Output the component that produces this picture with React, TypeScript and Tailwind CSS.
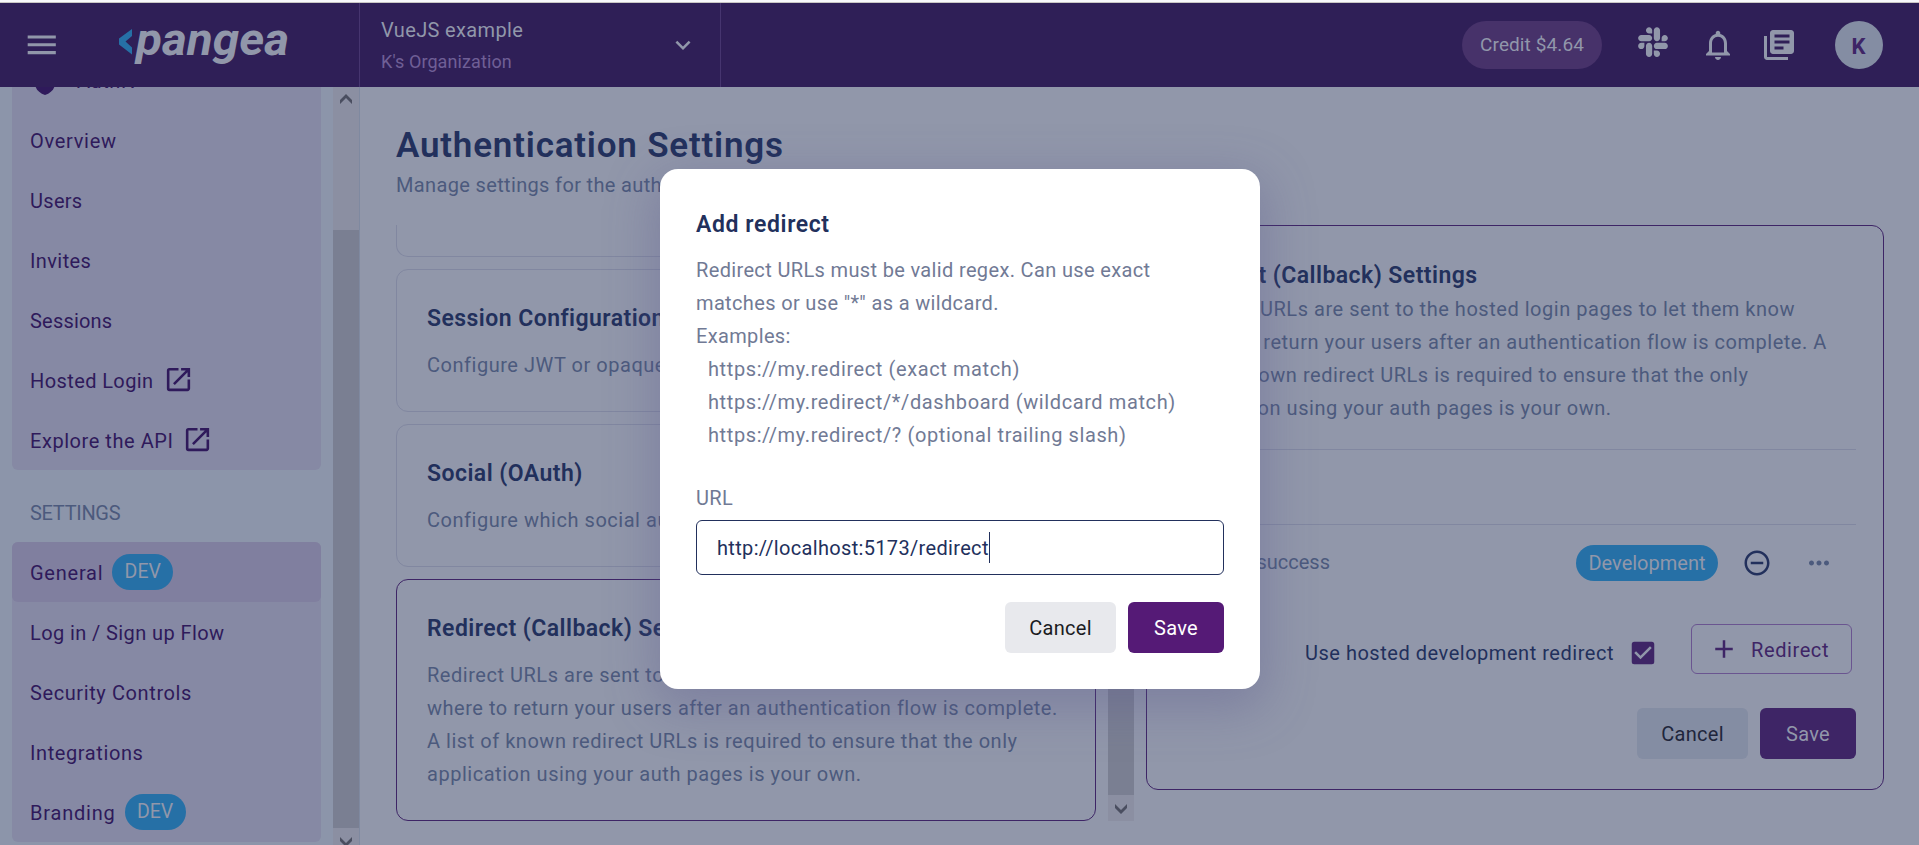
import React from "react";
import {
  MdAdd,
  MdCheckBox,
  MdExpandMore,
  MdLibraryBooks,
  MdMenu,
  MdMoreHoriz,
  MdNotificationsNone,
  MdOpenInNew,
  MdRemoveCircleOutline,
} from "react-icons/md";
import { FaSlack } from "react-icons/fa";

function Logo() {
  return (
    <svg
      width="180"
      height="56"
      viewBox="0 -8 180 56"
      className="block overflow-visible"
      aria-label="pangea"
    >
      <path d="M14 3v7L7.500 15.500l6.500 6v7L1 18.500v-6z" fill="#2670a6" />
      <text
        x="18"
        y="29"
        textLength="153"
        lengthAdjust="spacingAndGlyphs"
        fill="#9197aa"
        fontFamily="Roboto, sans-serif"
        fontWeight="700"
        fontStyle="italic"
        fontSize="47"
      >
        pangea
      </text>
    </svg>
  );
}

function Arrow({ up }: { up?: boolean }) {
  return (
    <svg width="12" height="10" viewBox="0 0 12 10" className="block">
      {up ? (
        <path d="M6 0l6 6v4L6 4 0 10V6z" fill="#4a4e60" />
      ) : (
        <path d="M6 10l6-6V0L6 6 0 0v4z" fill="#4a4e60" />
      )}
    </svg>
  );
}

function DevPill() {
  return (
    <span className="ml-[9px] flex h-9 w-[61px] -translate-y-px items-center justify-center rounded-[18px] bg-[#2670a6] text-[19.5px] tracking-normal text-[#9197aa]">
      DEV
    </span>
  );
}

function NavItem({
  label,
  external,
  dev,
  active,
  tracking = "tracking-[0.6px]",
}: {
  label: string;
  external?: boolean;
  dev?: boolean;
  active?: boolean;
  tracking?: string;
}) {
  return (
    <li
      className={
        "flex h-[60px] shrink-0 items-center rounded-md pl-[18px] pt-px " +
        (active ? "bg-[#807f9f]" : "")
      }
    >
      <span className={tracking}>{label}</span>
      {external && <MdOpenInNew className="ml-[9px] -translate-y-px" size={31} />}
      {dev && <DevPill />}
    </li>
  );
}

function Header() {
  return (
    <header className="flex h-[84px] shrink-0 bg-[#2f1f57] text-[#9197aa]">
      <div className="flex w-[360px] items-center border-r border-[#46356f] pl-[23px]">
        <MdMenu size={37.5} />
        <div className="ml-[57px] mt-[2px]">
          <Logo />
        </div>
      </div>
      <div className="flex w-[361px] items-center justify-between border-r border-[#46356f] pl-[21px] pr-[22px]">
        <div className="flex flex-col pt-[2px]">
          <span className="text-[20px] leading-[31px] tracking-[0.35px]">VueJS example</span>
          <span className="text-[18px] leading-[31px] tracking-[0.1px] text-[#6f5f96]">
            K's Organization
          </span>
        </div>
        <MdExpandMore size={30} />
      </div>
      <div className="flex flex-1 items-center justify-end pr-9">
        <span className="flex h-12 w-[140px] items-center justify-center rounded-full bg-[#47326a] pt-px text-[19px] tracking-[0.1px]">
          Credit $4.64
        </span>
        <FaSlack className="ml-[34px] -translate-y-[3px]" size={34} />
        <MdNotificationsNone className="ml-[30px]" size={36} />
        <MdLibraryBooks className="ml-[25px]" size={36} />
        <span className="ml-[38px] flex h-12 w-12 items-center justify-center rounded-full bg-[#848da3] pr-px pt-[3px] text-[22px] font-bold text-[#3e2566]">
          K
        </span>
      </div>
    </header>
  );
}

function Sidebar() {
  return (
    <aside className="flex w-[360px] shrink-0 border-r border-[#7f89a0] bg-[#8c95aa]">
      <nav className="flex w-[333px] flex-col overflow-hidden pl-3 pr-3 text-[20px] text-[#2f1a5b]">
        <ul className="-mt-[37px] flex shrink-0 flex-col rounded-md bg-[#8689a4]">
          <li className="flex h-[60px] items-center pl-[22px] pt-[2px]">
            <svg width="22" height="26" viewBox="0 0 22 26" className="translate-y-[1px]">
              <path d="M11 0l10 4v10c0 6-4 10-10 12C5 24 1 20 1 14V4z" fill="#2f1a5b" />
            </svg>
            <span className="ml-[21px] tracking-[0.6px]">AuthN</span>
          </li>
          <NavItem label="Overview" tracking="tracking-[0.7px]" />
          <NavItem label="Users" tracking="tracking-[0.3px]" />
          <NavItem label="Invites" tracking="tracking-[0.4px]" />
          <NavItem label="Sessions" tracking="tracking-[0.2px]" />
          <NavItem label="Hosted Login" external tracking="tracking-[0.4px]" />
          <NavItem label="Explore the API" external tracking="tracking-[0.55px]" />
        </ul>
        <h2 className="mt-[27px] pl-[18px] text-[20px] leading-[33px] tracking-[-0.3px] text-[#4c5a7d]">
          SETTINGS
        </h2>
        <ul className="mt-3 flex shrink-0 flex-col rounded-md bg-[#8689a4]">
          <NavItem label="General" dev active tracking="tracking-[0.75px]" />
          <NavItem label="Log in / Sign up Flow" tracking="tracking-[0.4px]" />
          <NavItem label="Security Controls" />
          <NavItem label="Integrations" />
          <NavItem label="Branding" dev tracking="tracking-[0.8px]" />
        </ul>
      </nav>
      <div className="flex w-[26px] flex-col items-center bg-[#8b8fa2]">
        <div className="flex h-[143px] shrink-0 pt-[7px]">
          <Arrow up />
        </div>
        <div className="h-[598px] w-full shrink-0 bg-[#7a7f92]" />
        <div className="h-[17px] overflow-hidden pt-[9px]">
          <Arrow />
        </div>
      </div>
    </aside>
  );
}

function SettingCard({
  title,
  lines,
  selected,
}: {
  title: string;
  lines: string[];
  selected?: boolean;
}) {
  return (
    <article
      className={
        "shrink-0 rounded-xl border pb-[29px] pl-[30px] pt-8 " +
        (selected ? "border-[#3e2566]" : "border-[#8187a0]")
      }
    >
      <h3 className="text-[23px] font-semibold leading-[33px] tracking-[0.45px] text-[#22305c]">
        {title}
      </h3>
      <div className="mt-[14px] whitespace-nowrap text-[20px] leading-[33px] tracking-[0.53px] text-[#4c5a7d]">
        {lines.map((l) => (
          <p key={l}>{l}</p>
        ))}
      </div>
    </article>
  );
}

function Buttons({ dim }: { dim?: boolean }) {
  return (
    <div className="flex justify-end gap-3 text-[20px] tracking-[0.3px]">
      <button
        className={
          "h-[51px] w-[111px] rounded-md pt-px " +
          (dim ? "bg-[#848da3] text-[#1f263c]" : "bg-[#e8e9ed] text-[#1b1b1f]")
        }
      >
        Cancel
      </button>
      <button
        className={
          "h-[51px] w-24 rounded-md pt-px " +
          (dim ? "bg-[#3e2566] text-[#9197aa]" : "bg-[#551a76] text-white")
        }
      >
        Save
      </button>
    </div>
  );
}

function RedirectPanel() {
  return (
    <section className="h-[565px] w-[738px] shrink-0 rounded-xl border border-[#3e2566] pb-[30px] pl-[30px] pr-[27px] pt-[33px]">
      <h3 className="text-[23px] font-semibold leading-[33px] tracking-[0.45px] text-[#22305c]">
        Redirect (Callback) Settings
      </h3>
      <div className="mt-px whitespace-nowrap text-[20px] leading-[33px] tracking-[0.53px] text-[#4c5a7d]">
        <p>Redirect URLs are sent to the hosted login pages to let them know</p>
        <p>where to return your users after an authentication flow is complete. A</p>
        <p>list of known redirect URLs is required to ensure that the only</p>
        <p>application using your auth pages is your own.</p>
      </div>
      <div className="mt-6 h-[76px] border-y border-[#8187a0]" />
      <div className="flex h-[75px] items-center">
        <span className="w-[153px] text-right text-[20px] leading-[33px] text-[#4c5a7d]">
          /login/success
        </span>
        <span className="ml-auto flex h-9 w-[142px] items-center justify-center rounded-[18px] bg-[#2670a6] text-[20px] text-[#9197aa]">
          Development
        </span>
        <MdRemoveCircleOutline className="ml-6 text-[#22305c]" size={30} />
        <MdMoreHoriz className="ml-[32px] mr-[22px] text-[#4c5a7d]" size={30} />
      </div>
      <div className="mt-6 flex items-center justify-end pr-1">
        <span className="mt-[7px] text-[20px] tracking-[0.53px] text-[#22305c]">
          Use hosted development redirect
        </span>
        <MdCheckBox className="ml-[14px] mt-[7px] text-[#3e2566]" size={30} />
        <button className="ml-[33px] flex h-[50px] w-[161px] items-center rounded-md border border-[#6a5590] pl-[17px] text-[20px] tracking-[0.6px] text-[#3e2566]">
          <MdAdd size={30} />
          <span className="ml-[12px] mt-[2px]">Redirect</span>
        </button>
      </div>
      <div className="mt-[34px]">
        <Buttons dim />
      </div>
    </section>
  );
}

function Dialog() {
  return (
    <div
      role="dialog"
      className="absolute left-[660px] top-[169px] flex h-[520px] w-[600px] flex-col rounded-[18px] bg-white px-9 pt-9 shadow-[0_14px_48px_6px_rgba(90,85,140,0.35)]"
    >
      <h2 className="text-[23px] font-semibold leading-[39px] tracking-[0.6px] text-[#22305c]">
        Add redirect
      </h2>
      <div className="mt-[10px] whitespace-nowrap text-[20px] leading-[33px] tracking-[0.35px] text-[#717a95]">
        <p>Redirect URLs must be valid regex. Can use exact</p>
        <p>matches or use "*" as a wildcard.</p>
        <p>Examples:</p>
        <div className="pl-3 tracking-[0.6px]">
          <p>https://my.redirect (exact match)</p>
          <p>https://my.redirect/*/dashboard (wildcard match)</p>
          <p>https://my.redirect/? (optional trailing slash)</p>
        </div>
      </div>
      <label className="mt-[30px] text-[20px] leading-[33px] tracking-[0.4px] text-[#717a95]">
        URL
      </label>
      <div className="mt-[5px] flex h-[55px] items-center rounded-md border border-[#22305c] pl-5 text-[20px] tracking-[0.33px] text-[#22305c]">
        <span>http://localhost:5173/redirect</span>
        <span className="h-[31px] w-px bg-[#22305c]" />
      </div>
      <div className="mt-[27px]">
        <Buttons />
      </div>
    </div>
  );
}

export default function App() {
  return (
    <div className="relative flex h-[845px] w-[1919px] flex-col overflow-hidden bg-[#9197aa] font-[Roboto,sans-serif]">
      <div className="h-[3px] shrink-0 border-b border-[#c9c7c5] bg-[#f8f8fb]" />
      <Header />
      <div className="flex h-[758px]">
        <Sidebar />
        <main className="flex flex-1 flex-col pl-9 pt-[38px]">
          <h1 className="text-[35px] font-semibold leading-[41px] tracking-[0.8px] text-[#22305c]">
            Authentication Settings
          </h1>
          <p className="mt-[3px] text-[20px] leading-[33px] tracking-[0.35px] text-[#4c5a7d]">
            Manage settings for the authentication service
          </p>
          <div className="mt-[23px] flex">
            <div className="flex h-[596px] w-[700px] flex-col gap-3 overflow-hidden">
              <div className="h-8 shrink-0 rounded-b-xl border border-t-0 border-[#8187a0]" />
              <SettingCard
                title="Session Configuration"
                lines={["Configure JWT or opaque tokens"]}
              />
              <SettingCard
                title="Social (OAuth)"
                lines={["Configure which social auth providers to use"]}
              />
              <SettingCard
                selected
                title="Redirect (Callback) Settings"
                lines={[
                  "Redirect URLs are sent to the hosted login pages to let them know",
                  "where to return your users after an authentication flow is complete.",
                  "A list of known redirect URLs is required to ensure that the only",
                  "application using your auth pages is your own.",
                ]}
              />
            </div>
            <div className="ml-3 mr-3 flex h-[596px] w-[26px] flex-col items-center bg-[#8b8fa2]">
              <div className="h-[570px] w-full bg-[#7a7f92]" />
              <div className="pt-[9px]">
                <Arrow />
              </div>
            </div>
            <RedirectPanel />
          </div>
        </main>
      </div>
      <Dialog />
    </div>
  );
}
